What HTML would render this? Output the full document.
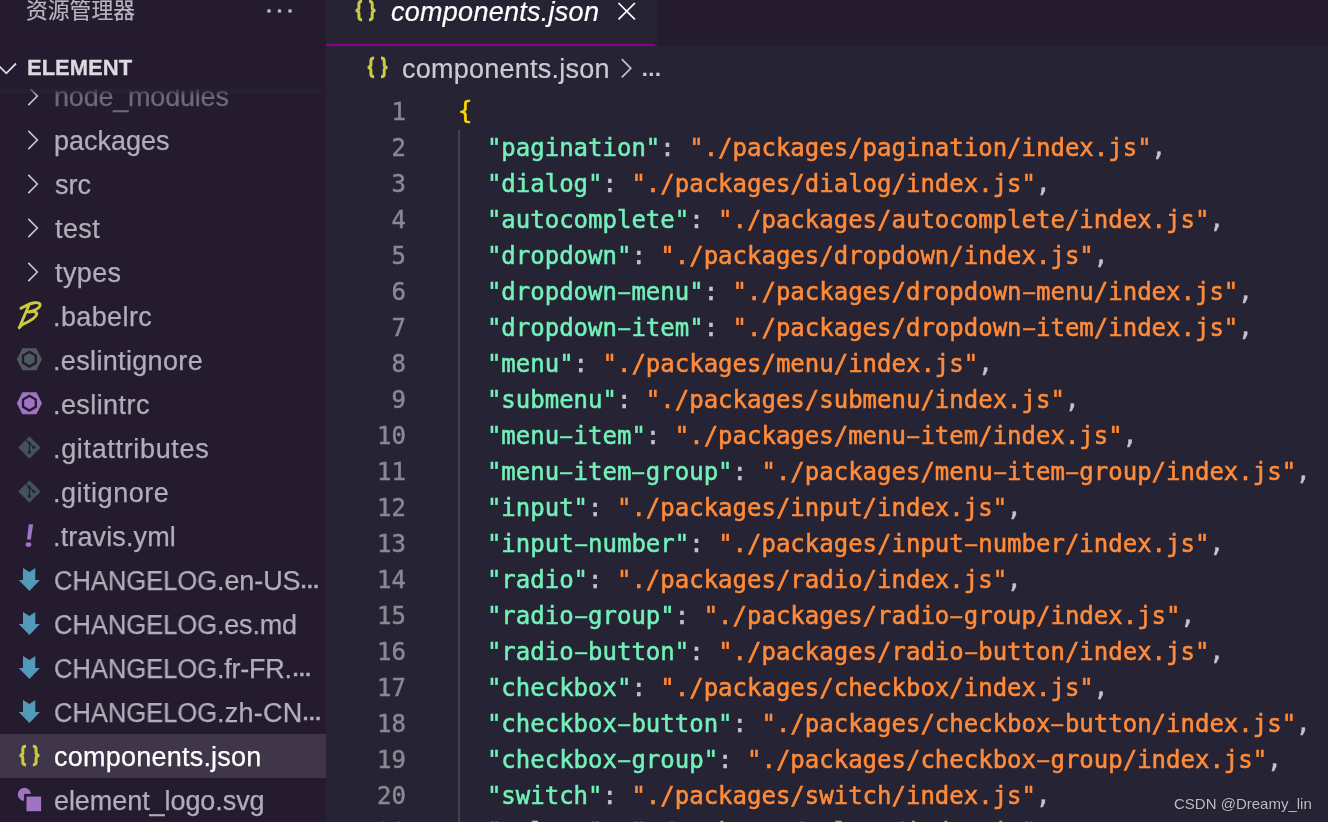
<!DOCTYPE html>
<html lang="zh"><head><meta charset="utf-8"><title>components.json</title>
<style>
html,body{margin:0;padding:0;background:#262335;}
body{width:1328px;height:822px;overflow:hidden;position:relative;font-family:"Liberation Sans","Noto Sans CJK SC",sans-serif;}
#side{position:absolute;left:0;top:0;width:326px;height:822px;background:#241b2f;overflow:hidden;}
#tabs{position:absolute;left:326px;top:0;width:1002px;height:46px;background:#241b2f;}
#tab{position:absolute;left:0;top:0;width:331px;height:46px;background:#262335;}
#tab:after{content:"";position:absolute;left:0;top:44px;width:329px;height:2px;background:#8a008a;}
#editor{position:absolute;left:326px;top:46px;width:1002px;height:776px;background:#262335;overflow:hidden;}
.title{position:absolute;left:26px;top:-6px;-webkit-text-stroke:0.2px;font-size:21.8px;line-height:30px;color:#b9b5bf;font-family:"Noto Sans CJK SC",sans-serif;}
.hdr{position:absolute;left:0;top:46px;width:326px;height:42.5px;background:#241b2f;z-index:3;}
.hdr:after{content:"";position:absolute;left:0;top:42.5px;width:326px;height:7px;background:linear-gradient(rgba(42,33,57,.8),rgba(42,33,57,0));}
.hdr .t{position:absolute;left:27px;top:0;line-height:44px;font-size:22px;font-weight:bold;color:#dcd9df;-webkit-text-stroke:0.3px;}
.row{position:absolute;left:0;width:326px;height:44px;line-height:44px;font-size:27px;color:#b2adb9;white-space:nowrap;-webkit-text-stroke:0.25px;}
.row.dim{color:#6f687a;}
.row.sel{background:#3f3749;color:#fff;}
.row .nm{position:absolute;top:1px;}
.row .el{font-size:19.7px;font-weight:bold;-webkit-text-stroke:0.5px;}
.row .cap{transform-origin:0 0;}
#icons{position:absolute;left:0;top:0;width:326px;height:822px;z-index:2;}
.ln{position:absolute;left:325.5px;width:80px;-webkit-text-stroke:0.45px;text-align:right;height:36px;font:24px/36px "DejaVu Sans Mono","Liberation Mono",monospace;color:#8b8893;}
.cl{position:absolute;left:458px;-webkit-text-stroke:0.55px;height:36px;white-space:pre;font:24px/36px "DejaVu Sans Mono","Liberation Mono",monospace;color:#c6c3cc;}
.h{display:inline-block;transform:scale(1.83,.82);}
.k{color:#72f1b8}.s{color:#ff8b39}.br{color:#ffd700;position:relative;top:-1px}
.guide{position:absolute;left:458px;top:130px;width:2px;height:700px;background:#444251;}
.tabname{position:absolute;top:-6px;-webkit-text-stroke:0.2px;line-height:36px;font-size:27px;font-style:italic;color:#fff;white-space:nowrap;}
.el2{font-size:20.7px !important;font-weight:bold;-webkit-text-stroke:0.5px;}
.crumb{position:absolute;top:47px;-webkit-text-stroke:0.2px;line-height:44px;font-size:27px;color:#cdcad2;white-space:nowrap;}
.wm{position:absolute;right:16px;top:795px;font-size:15px;color:#bfbdc3;text-shadow:0 0 1px rgba(0,0,0,.6);}
#top{position:absolute;left:326px;top:0;width:1002px;height:90px;z-index:4;}
.row .nm,.cl,.ln,.tabname,.crumb,.title,.hdr .t,.wm{will-change:transform;}
</style></head><body>
<div id="side">
 <div class="title">资源管理器</div>
 <div class="row dim" style="top:74px"><span class="nm" style="left:53.90px;letter-spacing:-0.20px">node_modules</span></div>
 <div class="row" style="top:118px"><span class="nm" style="left:54.30px;letter-spacing:-0.01px">packages</span></div>
 <div class="row" style="top:162px"><span class="nm" style="left:54.90px;letter-spacing:0.05px">src</span></div>
 <div class="row" style="top:206px"><span class="nm" style="left:54.70px;letter-spacing:0.39px">test</span></div>
 <div class="row" style="top:250px"><span class="nm" style="left:54.70px;letter-spacing:0.39px">types</span></div>
 <div class="row" style="top:294px"><span class="nm" style="left:53.20px;letter-spacing:0.39px">.babelrc</span></div>
 <div class="row" style="top:338px"><span class="nm" style="left:53.20px;letter-spacing:0.34px">.eslintignore</span></div>
 <div class="row" style="top:382px"><span class="nm" style="left:53.20px;letter-spacing:0.42px">.eslintrc</span></div>
 <div class="row" style="top:426px"><span class="nm" style="left:53.20px;letter-spacing:0.66px">.gitattributes</span></div>
 <div class="row" style="top:470px"><span class="nm" style="left:53.20px;letter-spacing:0.52px">.gitignore</span></div>
 <div class="row" style="top:514px"><span class="nm" style="left:53.20px;letter-spacing:0.13px">.travis.yml</span></div>
 <div class="row" style="top:558px"><span class="nm cap" style="left:54.46px;transform:scaleX(0.9450)">CHANGELOG</span><span class="nm" style="left:216.60px;letter-spacing:-0.08px">.en-US</span><span class="nm el" style="left:299.60px">…</span></div>
 <div class="row" style="top:602px"><span class="nm cap" style="left:54.46px;transform:scaleX(0.9450)">CHANGELOG</span><span class="nm" style="left:216.60px;letter-spacing:-0.20px">.es.md</span></div>
 <div class="row" style="top:646px"><span class="nm cap" style="left:54.46px;transform:scaleX(0.9450)">CHANGELOG</span><span class="nm" style="left:216.60px;letter-spacing:-0.25px">.fr-FR.</span><span class="nm el" style="left:291.60px">…</span></div>
 <div class="row" style="top:690px"><span class="nm cap" style="left:54.46px;transform:scaleX(0.9450)">CHANGELOG</span><span class="nm" style="left:216.60px;letter-spacing:0.24px">.zh-CN</span><span class="nm el" style="left:301.70px">…</span></div>
 <div class="row sel" style="top:734px"><span class="nm" style="left:54.20px;letter-spacing:0.23px">components.json</span></div>
 <div class="row" style="top:778px"><span class="nm" style="left:54.20px;letter-spacing:-0.07px">element_logo.svg</span></div>
 <svg id="icons" viewBox="0 0 326 822">
 <circle cx="269" cy="10.9" r="1.9" fill="#b9b5bf"/><circle cx="279.5" cy="10.9" r="1.9" fill="#b9b5bf"/><circle cx="290" cy="10.9" r="1.9" fill="#b9b5bf"/>
 <path d="M28.3 86.9l9 9.1-9 9.1" fill="none" stroke="#c5c2c9" stroke-width="1.7" stroke-linejoin="miter"/>
 <path d="M28.3 130.9l9 9.1-9 9.1" fill="none" stroke="#c5c2c9" stroke-width="1.7" stroke-linejoin="miter"/>
 <path d="M28.3 174.9l9 9.1-9 9.1" fill="none" stroke="#c5c2c9" stroke-width="1.7" stroke-linejoin="miter"/>
 <path d="M28.3 218.9l9 9.1-9 9.1" fill="none" stroke="#c5c2c9" stroke-width="1.7" stroke-linejoin="miter"/>
 <path d="M28.3 262.9l9 9.1-9 9.1" fill="none" stroke="#c5c2c9" stroke-width="1.7" stroke-linejoin="miter"/>
 <path d="M20.9 308.3C24.0 306.8 29.0 303.2 34.6 302.7C38.5 302.4 40.6 303.4 40.0 305.6C39.2 308.6 34.0 310.8 28.4 312.0C32.0 311.4 37.6 311.2 36.8 314.2C35.6 318.6 27.0 322.6 22.2 324.6L19.2 327.6M29.0 305.0L19.6 327.0" fill="none" stroke="#cbcb41" stroke-width="2.9" stroke-linecap="round" stroke-linejoin="round"/>
 <path d="M22.4 348.2H36.4L42.0 359.2L36.4 370.2H22.4L16.8 359.2Z" fill="#4d5a5e"/><path d="M29.4 351.8L35.8 355.6V362.8L29.4 366.6L23.0 362.8V355.6Z" fill="none" stroke="#241b2f" stroke-width="2.3" stroke-linejoin="miter"/>
 <path d="M22.4 392.2H36.4L42.0 403.2L36.4 414.2H22.4L16.8 403.2Z" fill="#a074c4"/><path d="M29.4 395.8L35.8 399.6V406.8L29.4 410.6L23.0 406.8V399.6Z" fill="none" stroke="#241b2f" stroke-width="2.3" stroke-linejoin="miter"/>
 <path d="M29.4 437.1L39.8 447.5L29.4 457.9L19.0 447.5Z" fill="#41535b" stroke="#41535b" stroke-width="1.2" stroke-linejoin="round"/><path d="M25.5 439.3L33.8 447.6M29.4 443.0V452.1" stroke="#241b2f" stroke-width="1.1" fill="none"/><circle cx="29.4" cy="443.0" r="1.3" fill="#241b2f"/><circle cx="33.8" cy="447.6" r="1.4" fill="#241b2f"/><circle cx="29.4" cy="452.2" r="1.6" fill="#241b2f"/>
 <path d="M29.4 481.1L39.8 491.5L29.4 501.9L19.0 491.5Z" fill="#41535b" stroke="#41535b" stroke-width="1.2" stroke-linejoin="round"/><path d="M25.5 483.3L33.8 491.6M29.4 487.0V496.1" stroke="#241b2f" stroke-width="1.1" fill="none"/><circle cx="29.4" cy="487.0" r="1.3" fill="#241b2f"/><circle cx="33.8" cy="491.6" r="1.4" fill="#241b2f"/><circle cx="29.4" cy="496.2" r="1.6" fill="#241b2f"/>
 <path d="M28.7 524.3H33.1L30.9 539.4H27Z" fill="#a074c4"/><ellipse cx="28.5" cy="544.6" rx="2.9" ry="2.3" fill="#a074c4"/>
 <path d="M23 568.0L29.4 571.9L35.3 568.0V580.0H39.9L29.4 590.9L18.8 580.0H23Z" fill="#519aba"/>
 <path d="M23 612.0L29.4 615.9L35.3 612.0V624.0H39.9L29.4 634.9L18.8 624.0H23Z" fill="#519aba"/>
 <path d="M23 656.0L29.4 659.9L35.3 656.0V668.0H39.9L29.4 678.9L18.8 668.0H23Z" fill="#519aba"/>
 <path d="M23 700.0L29.4 703.9L35.3 700.0V712.0H39.9L29.4 722.9L18.8 712.0H23Z" fill="#519aba"/>
 <path d="M26.0 746.3C24.0 746.3 22.8 747.0 22.8 749.2V752.8C22.8 754.6 21.6 755.6 19.5 755.6C21.6 755.6 22.8 756.6 22.8 758.4V762.1C22.8 764.2 24.0 764.9 26.0 764.9M32.9 746.3C34.9 746.3 36.1 747.0 36.1 749.2V752.8C36.1 754.6 37.3 755.6 39.4 755.6C37.3 755.6 36.1 756.6 36.1 758.4V762.1C36.1 764.2 34.9 764.9 32.9 764.9" fill="none" stroke="#cbcb41" stroke-width="3" stroke-linecap="butt"/>
 <circle cx="24.4" cy="794.4" r="6.6" fill="#a074c4"/><rect x="24.1" y="793.9" width="20" height="20" fill="#241b2f"/><rect x="26.5" y="796.6" width="14.6" height="14.6" fill="#a074c4"/>
 </svg>
 <div class="hdr"><svg style="position:absolute;left:0;top:0;width:40px;height:44px" viewBox="0 0 40 44"><path d="M-3.5 17.5L6.3 27.3L16 17.5" fill="none" stroke="#dcd9df" stroke-width="1.8"/></svg><span class="t">ELEMENT</span></div>
</div>
<div id="tabs"><div id="tab"></div></div>
<div id="editor"></div>
<span class="tabname" style="left:390.60px;letter-spacing:0.27px">components.json</span>
<span class="crumb" style="left:401.70px;letter-spacing:0.24px">components.json</span>
<span class="crumb el2" style="left:641.40px">…</span>
<svg id="top" viewBox="326 0 1002 90">
 <path d="M362.1 1.3C360.1 1.3 358.9 2.0 358.9 4.2V7.8C358.9 9.6 357.7 10.6 355.6 10.6C357.7 10.6 358.9 11.6 358.9 13.4V17.1C358.9 19.2 360.1 19.9 362.1 19.9M369.0 1.3C371.0 1.3 372.2 2.0 372.2 4.2V7.8C372.2 9.6 373.4 10.6 375.5 10.6C373.4 10.6 372.2 11.6 372.2 13.4V17.1C372.2 19.2 371.0 19.9 369.0 19.9" fill="none" stroke="#cbcb41" stroke-width="3" stroke-linecap="butt"/>
 <path d="M374.1 58.1C372.1 58.1 370.9 58.8 370.9 61.0V64.6C370.9 66.4 369.7 67.4 367.6 67.4C369.7 67.4 370.9 68.4 370.9 70.2V73.9C370.9 76.0 372.1 76.7 374.1 76.7M381.0 58.1C383.0 58.1 384.2 58.8 384.2 61.0V64.6C384.2 66.4 385.4 67.4 387.5 67.4C385.4 67.4 384.2 68.4 384.2 70.2V73.9C384.2 76.0 383.0 76.7 381.0 76.7" fill="none" stroke="#cbcb41" stroke-width="3" stroke-linecap="butt"/>
 <path d="M618.5 3L634.9 19.4M634.9 3L618.5 19.4" stroke="#fff" stroke-width="1.7" fill="none"/>
 <path d="M621.8 59.2L630.8 68.3L621.8 77.4" stroke="#c4c1c9" stroke-width="1.7" fill="none"/>
</svg>
<div class="guide"></div>
<div class="ln" style="top:94px">1</div><div class="cl" style="top:94px"><span class="br">{</span></div>
<div class="ln" style="top:130px">2</div><div class="cl" style="top:130px">  <span class="k">"pagination"</span>: <span class="s">"./packages/pagination/index.js"</span>,</div>
<div class="ln" style="top:166px">3</div><div class="cl" style="top:166px">  <span class="k">"dialog"</span>: <span class="s">"./packages/dialog/index.js"</span>,</div>
<div class="ln" style="top:202px">4</div><div class="cl" style="top:202px">  <span class="k">"autocomplete"</span>: <span class="s">"./packages/autocomplete/index.js"</span>,</div>
<div class="ln" style="top:238px">5</div><div class="cl" style="top:238px">  <span class="k">"dropdown"</span>: <span class="s">"./packages/dropdown/index.js"</span>,</div>
<div class="ln" style="top:274px">6</div><div class="cl" style="top:274px">  <span class="k">"dropdown<span class="h">-</span>menu"</span>: <span class="s">"./packages/dropdown<span class="h">-</span>menu/index.js"</span>,</div>
<div class="ln" style="top:310px">7</div><div class="cl" style="top:310px">  <span class="k">"dropdown<span class="h">-</span>item"</span>: <span class="s">"./packages/dropdown<span class="h">-</span>item/index.js"</span>,</div>
<div class="ln" style="top:346px">8</div><div class="cl" style="top:346px">  <span class="k">"menu"</span>: <span class="s">"./packages/menu/index.js"</span>,</div>
<div class="ln" style="top:382px">9</div><div class="cl" style="top:382px">  <span class="k">"submenu"</span>: <span class="s">"./packages/submenu/index.js"</span>,</div>
<div class="ln" style="top:418px">10</div><div class="cl" style="top:418px">  <span class="k">"menu<span class="h">-</span>item"</span>: <span class="s">"./packages/menu<span class="h">-</span>item/index.js"</span>,</div>
<div class="ln" style="top:454px">11</div><div class="cl" style="top:454px">  <span class="k">"menu<span class="h">-</span>item<span class="h">-</span>group"</span>: <span class="s">"./packages/menu<span class="h">-</span>item<span class="h">-</span>group/index.js"</span>,</div>
<div class="ln" style="top:490px">12</div><div class="cl" style="top:490px">  <span class="k">"input"</span>: <span class="s">"./packages/input/index.js"</span>,</div>
<div class="ln" style="top:526px">13</div><div class="cl" style="top:526px">  <span class="k">"input<span class="h">-</span>number"</span>: <span class="s">"./packages/input<span class="h">-</span>number/index.js"</span>,</div>
<div class="ln" style="top:562px">14</div><div class="cl" style="top:562px">  <span class="k">"radio"</span>: <span class="s">"./packages/radio/index.js"</span>,</div>
<div class="ln" style="top:598px">15</div><div class="cl" style="top:598px">  <span class="k">"radio<span class="h">-</span>group"</span>: <span class="s">"./packages/radio<span class="h">-</span>group/index.js"</span>,</div>
<div class="ln" style="top:634px">16</div><div class="cl" style="top:634px">  <span class="k">"radio<span class="h">-</span>button"</span>: <span class="s">"./packages/radio<span class="h">-</span>button/index.js"</span>,</div>
<div class="ln" style="top:670px">17</div><div class="cl" style="top:670px">  <span class="k">"checkbox"</span>: <span class="s">"./packages/checkbox/index.js"</span>,</div>
<div class="ln" style="top:706px">18</div><div class="cl" style="top:706px">  <span class="k">"checkbox<span class="h">-</span>button"</span>: <span class="s">"./packages/checkbox<span class="h">-</span>button/index.js"</span>,</div>
<div class="ln" style="top:742px">19</div><div class="cl" style="top:742px">  <span class="k">"checkbox<span class="h">-</span>group"</span>: <span class="s">"./packages/checkbox<span class="h">-</span>group/index.js"</span>,</div>
<div class="ln" style="top:778px">20</div><div class="cl" style="top:778px">  <span class="k">"switch"</span>: <span class="s">"./packages/switch/index.js"</span>,</div>
<div class="ln" style="top:814px">21</div><div class="cl" style="top:814px">  <span class="k">"select"</span>: <span class="s">"./packages/select/index.js"</span>,</div>
<div class="wm">CSDN @Dreamy_lin</div>
</body></html>
